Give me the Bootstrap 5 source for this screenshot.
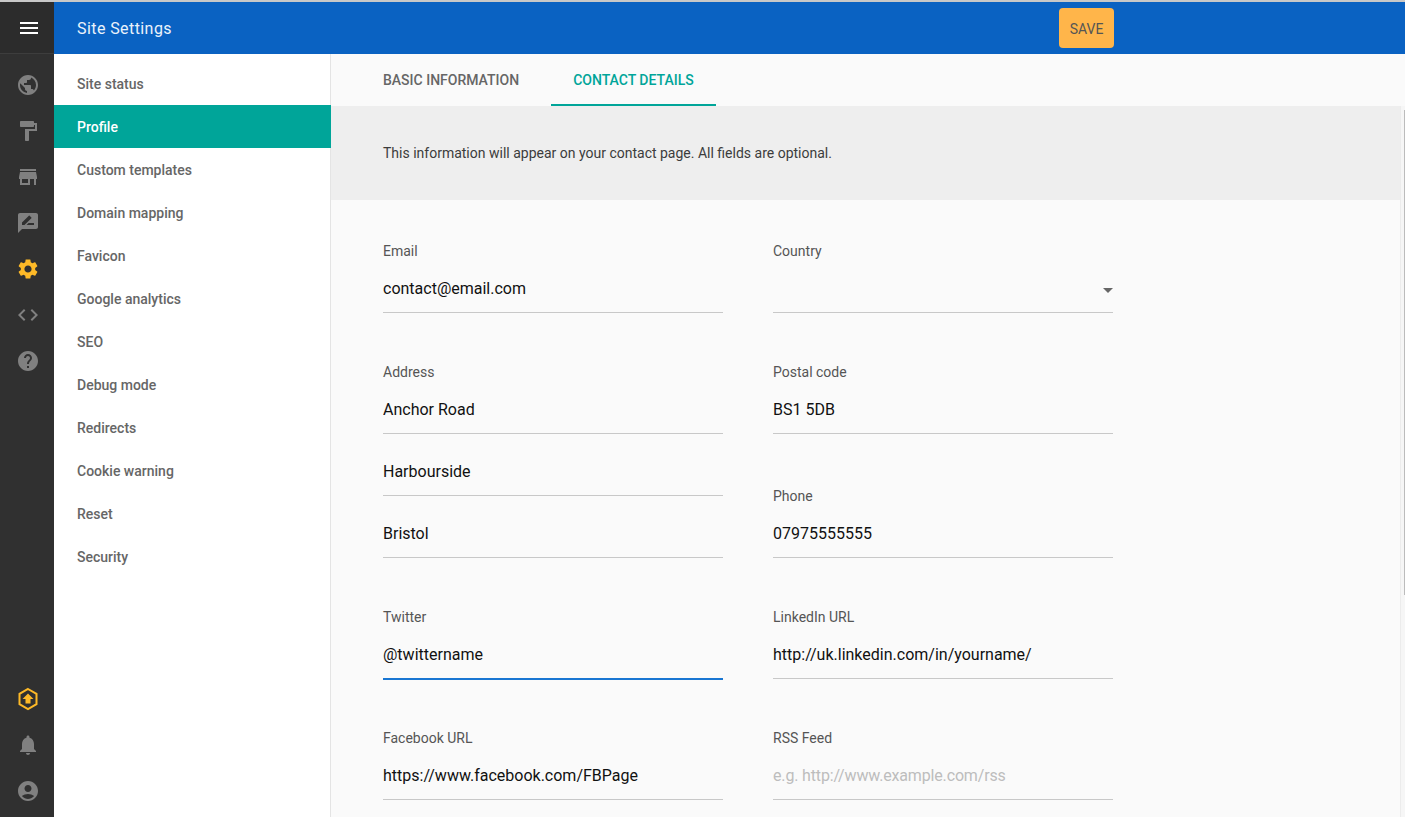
<!DOCTYPE html>
<html lang="en">
<head>
    <meta charset="UTF-8">
    <meta name="viewport" content="width=device-width, initial-scale=1.0">
    <link href="https://cdn.jsdelivr.net/npm/bootstrap@5.3.3/dist/css/bootstrap.min.css" rel="stylesheet">
    <script src="https://cdn.jsdelivr.net/npm/bootstrap@5.3.3/dist/js/bootstrap.bundle.min.js"></script>
    <title>Site Settings</title>
    <style>
        html, body { height: 100%; overflow: hidden; }
        body { font-family: Roboto, "Liberation Sans", sans-serif; background: #fafafa; color: #333; }
        .top-edge { height: 2px; background: #c8c8c8; }
        .app-shell { height: calc(100vh - 2px); }
        .icon-rail { width: 54px; background: #303030; }
        .rail-burger { height: 52px; padding-left: 4px; background: #2c2c2c; border-bottom: 1px solid #3d3d3d; }
        .rail-btn { height: 46px; padding-left: 2px; }
        .rail-foot { padding-bottom: 3px; }
        .title-bar { height: 52px; background: #0a62c2; }
        .title-text { width: 1005px; padding: 2px 0 0 23px; color: #eaf2fb; font-size: 16px; font-weight: 400; letter-spacing: .42px; }
        .save-btn { width: 55px; height: 40px; padding: 2px 0 0; background: #ffb54a; border: 0; border-radius: 4px; color: #555; font-size: 14px; }
        .side-menu { width: 277px; background: #fff; border-right: 1px solid #e4e4e4; }
        .side-menu a { height: 43px; padding: 2px 0 0 23px; color: #666; font-size: 14px; font-weight: 500; text-decoration: none; }
        .side-menu a.current { margin-right: -1px; background: #00a599; color: #fff; }
        .tab-strip { height: 52px; padding-left: 30px; }
        .tab-strip a { padding: 2px 22px 0; color: #666; font-size: 14px; font-weight: 500; text-decoration: none; border-bottom: 2px solid transparent; }
        .tab-strip a + a { margin-left: 10px; }
        .tab-strip a.current { color: #00a599; border-bottom-color: #00a599; }
        .note-band { height: 94px; padding-left: 52px; background: #eee; font-size: 14px; color: #3c3c3c; }
        .form-area { padding: 41px 0 0 52px; width: 782px; }
        .form-cols { display: grid; grid-template-columns: 340px 340px; column-gap: 50px; }
        .field-label { display: block; height: 20px; margin: 0; font-size: 14px; line-height: 20px; color: #555; }
        .text-field { display: block; width: 100%; height: 46px; margin-top: 6px; padding: 0 0 3px; border: 0; border-bottom: 1px solid #c8c8c8; border-radius: 0; background: transparent; font-size: 16px; color: #111; outline: 0; }
        .text-field::placeholder { color: #bdbdbd; letter-spacing: -.16px; }
        .text-field.active-field { height: 47px; margin-bottom: -1px; border-bottom: 2px solid #1976d2; }
        .field-stack { margin-bottom: 49px; }
        .field-stack .text-field + .text-field { margin-top: 16px; }
        .select-wrap { position: relative; }
        .select-arrow { position: absolute; right: 0; top: 21px; width: 0; height: 0; border-left: 5px solid transparent; border-right: 5px solid transparent; border-top: 5px solid #666; }
        .phone-label { margin-top: 52px; }
        .scroll-track { width: 5px; background: #f6f6f6; border-left: 1px solid #ececec; }
        .scroll-thumb { height: 485px; margin: 4px 0 0 3px; background: #bcbcbc; }
    </style>
</head>
<body>
    <div class="top-edge"></div>
    <div class="app-shell d-flex">
        <nav class="icon-rail d-flex flex-column flex-shrink-0">
            <div class="rail-burger d-flex align-items-center justify-content-center">
                <svg width="24" height="24" viewBox="0 0 24 24" fill="#fff"><path d="M3 18h18v-2H3zm0-5h18v-2H3zm0-7v2h18V6z"/></svg>
            </div>
            <div class="d-flex flex-column flex-grow-1 pt-2">
                <div class="rail-btn d-flex align-items-center justify-content-center"><svg width="24" height="24" viewBox="0 0 24 24" fill="#808080"><path d="M12 2C6.48 2 2 6.48 2 12s4.48 10 10 10 10-4.48 10-10S17.520 2 12 2zm-1 17.930c-3.950-.49-7-3.850-7-7.930 0-.62.08-1.210.21-1.790L9 15v1c0 1.100.9 2 2 2v1.930zm6.900-2.540c-.26-.81-1-1.390-1.900-1.390h-1v-3c0-.55-.45-1-1-1H8v-2h2c.55 0 1-.45 1-1V7h2c1.100 0 2-.9 2-2v-.41c2.930 1.190 5 4.060 5 7.410 0 2.080-.8 3.970-2.100 5.390z"/></svg></div>
                <div class="rail-btn d-flex align-items-center justify-content-center"><svg width="24" height="24" viewBox="0 0 24 24" fill="#808080"><path d="M18 4V3c0-.55-.45-1-1-1H5c-.55 0-1 .45-1 1v4c0 .55.45 1 1 1h12c.55 0 1-.45 1-1V6h1v4H9v11c0 .55.45 1 1 1h2c.55 0 1-.45 1-1v-9h8V4h-3z"/></svg></div>
                <div class="rail-btn d-flex align-items-center justify-content-center"><svg width="24" height="24" viewBox="0 0 24 24" fill="#808080"><path d="M20 4H4v2h16V4zm1 10v-2l-1-5H4l-1 5v2h1v6h10v-6h4v6h2v-6h1zm-9 4H6v-4h6v4z"/></svg></div>
                <div class="rail-btn d-flex align-items-center justify-content-center"><svg width="24" height="24" viewBox="0 0 24 24" fill="#808080"><path d="M20 2H4c-1.100 0-2 .9-2 2v18l4-4h14c1.100 0 2-.9 2-2V4c0-1.100-.9-2-2-2zM6 14v-2.470l6.880-6.880c.2-.2.510-.2.710 0l1.770 1.770c.2.2.2.510 0 .710L8.470 14H6zm12 0h-7.500l2-2H18v2z"/></svg></div>
                <div class="rail-btn d-flex align-items-center justify-content-center"><svg width="24" height="24" viewBox="0 0 24 24" fill="#fdb927"><path d="M19.140 12.940c.04-.3.060-.61.060-.94 0-.32-.02-.64-.07-.94l2.030-1.580c.18-.14.230-.41.120-.61l-1.920-3.320c-.12-.22-.37-.29-.59-.22l-2.390.96c-.5-.38-1.030-.7-1.620-.94l-.36-2.540c-.04-.24-.24-.41-.48-.41h-3.840c-.24 0-.43.17-.47.41l-.36 2.540c-.59.24-1.130.57-1.620.94l-2.390-.96c-.22-.08-.47 0-.59.22L2.740 8.870c-.12.21-.08.47.12.61l2.030 1.580c-.05.3-.09.63-.09.94s.02.64.07.94l-2.030 1.580c-.18.14-.23.41-.12.61l1.920 3.320c.12.22.37.29.59.22l2.390-.96c.5.38 1.030.7 1.620.94l.36 2.540c.05.24.24.41.48.41h3.840c.24 0 .44-.17.47-.41l.36-2.540c.59-.24 1.130-.56 1.620-.94l2.390.96c.22.080.47 0 .59-.22l1.920-3.320c.12-.22.070-.47-.12-.61l-2.010-1.580zM12 15.600c-1.980 0-3.600-1.620-3.600-3.600s1.620-3.600 3.600-3.600 3.600 1.620 3.600 3.600-1.620 3.600-3.600 3.600z"/></svg></div>
                <div class="rail-btn d-flex align-items-center justify-content-center"><svg width="24" height="24" viewBox="0 0 24 24" fill="#808080"><path d="M9.400 16.600 4.800 12l4.600-4.600L8 6l-6 6 6 6 1.400-1.400zm5.200 0 4.600-4.600-4.600-4.600L16 6l6 6-6 6-1.400-1.400z"/></svg></div>
                <div class="rail-btn d-flex align-items-center justify-content-center"><svg width="24" height="24" viewBox="0 0 24 24" fill="#808080"><path d="M12 2C6.480 2 2 6.480 2 12s4.480 10 10 10 10-4.480 10-10S17.520 2 12 2zm1 17h-2v-2h2v2zm2.070-7.750-.9.920C13.450 12.900 13 13.500 13 15h-2v-.5c0-1.100.45-2.100 1.170-2.830l1.240-1.260c.37-.36.590-.86.590-1.410 0-1.100-.9-2-2-2s-2 .9-2 2H8c0-2.210 1.790-4 4-4s4 1.790 4 4c0 .88-.36 1.680-.93 2.250z"/></svg></div>
                <div class="mt-auto rail-foot">
                    <div class="rail-btn d-flex align-items-center justify-content-center"><svg width="24" height="24" viewBox="0 0 24 24"><path d="M12 2 20.500 6.900v10.200L12 22l-8.500-4.900V6.900z" fill="none" stroke="#fdb927" stroke-width="2"/><path d="M12 6.500l5.500 5.500H14.500v4.500h-5V12H6.500z" fill="#fdb927"/></svg></div>
                    <div class="rail-btn d-flex align-items-center justify-content-center"><svg width="24" height="24" viewBox="0 0 24 24" fill="#808080"><path d="M12 22c1.100 0 2-.9 2-2h-4c0 1.100.9 2 2 2zm6-6v-5c0-3.070-1.630-5.640-4.500-6.320V4c0-.83-.67-1.500-1.500-1.500s-1.500.67-1.500 1.500v.68C7.640 5.360 6 7.920 6 11v5l-2 2v1h16v-1l-2-2z"/></svg></div>
                    <div class="rail-btn d-flex align-items-center justify-content-center"><svg width="24" height="24" viewBox="0 0 24 24" fill="#808080"><path d="M12 2C6.480 2 2 6.480 2 12s4.480 10 10 10 10-4.480 10-10S17.520 2 12 2zm0 4c1.930 0 3.500 1.570 3.500 3.500S13.930 13 12 13s-3.500-1.570-3.500-3.500S10.070 6 12 6zm0 14c-2.030 0-4.430-.82-6.140-2.880C7.550 15.800 9.680 15 12 15s4.450.8 6.140 2.120C16.430 19.180 14.030 20 12 20z"/></svg></div>
                </div>
            </div>
        </nav>
        <div class="flex-grow-1 d-flex flex-column min-w-0">
            <header class="title-bar d-flex align-items-center flex-shrink-0">
                <div class="title-text">Site Settings</div>
                <button type="button" class="btn save-btn">SAVE</button>
            </header>
            <div class="d-flex flex-grow-1 overflow-hidden">
                <aside class="side-menu d-flex flex-column flex-shrink-0 pt-2">
                    <a class="d-flex align-items-center" href="#">Site status</a>
                    <a class="d-flex align-items-center current" href="#">Profile</a>
                    <a class="d-flex align-items-center" href="#">Custom templates</a>
                    <a class="d-flex align-items-center" href="#">Domain mapping</a>
                    <a class="d-flex align-items-center" href="#">Favicon</a>
                    <a class="d-flex align-items-center" href="#">Google analytics</a>
                    <a class="d-flex align-items-center" href="#">SEO</a>
                    <a class="d-flex align-items-center" href="#">Debug mode</a>
                    <a class="d-flex align-items-center" href="#">Redirects</a>
                    <a class="d-flex align-items-center" href="#">Cookie warning</a>
                    <a class="d-flex align-items-center" href="#">Reset</a>
                    <a class="d-flex align-items-center" href="#">Security</a>
                </aside>
                <main class="flex-grow-1 d-flex flex-column overflow-hidden">
                    <div class="tab-strip d-flex flex-shrink-0">
                        <a class="d-flex align-items-center" href="#">BASIC INFORMATION</a>
                        <a class="d-flex align-items-center current" href="#">CONTACT DETAILS</a>
                    </div>
                    <div class="d-flex flex-grow-1 overflow-hidden">
                        <div class="flex-grow-1">
                            <div class="note-band d-flex align-items-center">This information will appear on your contact page. All fields are optional.</div>
                            <form class="form-area">
                                <div class="form-cols">
                                    <div class="field-stack">
                                        <label class="field-label">Email</label>
                                        <input class="text-field" type="text" value="contact@email.com">
                                    </div>
                                    <div class="field-stack">
                                        <label class="field-label">Country</label>
                                        <div class="select-wrap">
                                            <input class="text-field" type="text">
                                            <span class="select-arrow"></span>
                                        </div>
                                    </div>
                                    <div class="field-stack">
                                        <label class="field-label">Address</label>
                                        <input class="text-field" type="text" value="Anchor Road">
                                        <input class="text-field" type="text" value="Harbourside">
                                        <input class="text-field" type="text" value="Bristol">
                                    </div>
                                    <div class="field-stack">
                                        <label class="field-label">Postal code</label>
                                        <input class="text-field" type="text" value="BS1 5DB">
                                        <label class="field-label phone-label">Phone</label>
                                        <input class="text-field" type="text" value="07975555555">
                                    </div>
                                    <div class="field-stack">
                                        <label class="field-label">Twitter</label>
                                        <input class="text-field active-field" type="text" value="@twittername">
                                    </div>
                                    <div class="field-stack">
                                        <label class="field-label">LinkedIn URL</label>
                                        <input class="text-field" type="text" value="http://uk.linkedin.com/in/yourname/">
                                    </div>
                                    <div class="field-stack">
                                        <label class="field-label">Facebook URL</label>
                                        <input class="text-field" type="text" value="https://www.facebook.com/FBPage">
                                    </div>
                                    <div class="field-stack">
                                        <label class="field-label">RSS Feed</label>
                                        <input class="text-field" type="text" placeholder="e.g. http://www.example.com/rss">
                                    </div>
                                </div>
                            </form>
                        </div>
                        <div class="scroll-track flex-shrink-0"><div class="scroll-thumb"></div></div>
                    </div>
                </main>
            </div>
        </div>
    </div>
</body>
</html>
